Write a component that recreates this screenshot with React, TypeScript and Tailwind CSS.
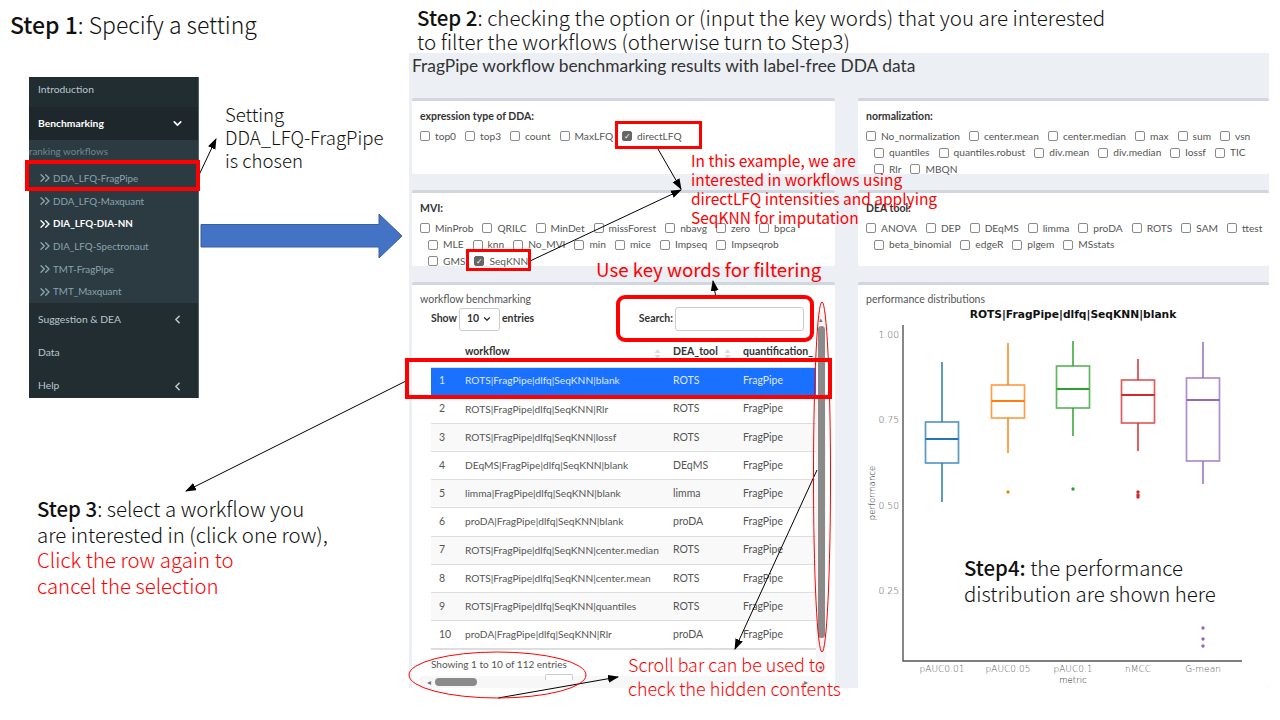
import { ChevronDown, ChevronLeft, ChevronsRight } from 'lucide-react';

const subMenu = [
    { name: 'DDA_LFQ-FragPipe', active: false },
    { name: 'DDA_LFQ-Maxquant', active: false },
    { name: 'DIA_LFQ-DIA-NN', active: true },
    { name: 'DIA_LFQ-Spectronaut', active: false },
    { name: 'TMT-FragPipe', active: false },
    { name: 'TMT_Maxquant', active: false },
];

const rows = [
    ['ROTS|FragPipe|dlfq|SeqKNN|blank', 'ROTS'],
    ['ROTS|FragPipe|dlfq|SeqKNN|Rlr', 'ROTS'],
    ['ROTS|FragPipe|dlfq|SeqKNN|lossf', 'ROTS'],
    ['DEqMS|FragPipe|dlfq|SeqKNN|blank', 'DEqMS'],
    ['limma|FragPipe|dlfq|SeqKNN|blank', 'limma'],
    ['proDA|FragPipe|dlfq|SeqKNN|blank', 'proDA'],
    ['ROTS|FragPipe|dlfq|SeqKNN|center.median', 'ROTS'],
    ['ROTS|FragPipe|dlfq|SeqKNN|center.mean', 'ROTS'],
    ['ROTS|FragPipe|dlfq|SeqKNN|quantiles', 'ROTS'],
    ['proDA|FragPipe|dlfq|SeqKNN|Rlr', 'proDA'],
];

const boxes = [
    { x: 942, color: '#1f77b4', top: 362, bottom: 502, q1: 422, q3: 463, med: 439, dots: [] as number[] },
    { x: 1008, color: '#ff7f0e', top: 343, bottom: 453, q1: 385, q3: 418, med: 401, dots: [492] },
    { x: 1073, color: '#2ca02c', top: 341, bottom: 436, q1: 366, q3: 408, med: 389, dots: [489] },
    { x: 1138, color: '#d62728', top: 359, bottom: 451, q1: 380, q3: 423, med: 395, dots: [492, 495, 497] },
    { x: 1203, color: '#9467bd', top: 342, bottom: 484, q1: 378, q3: 461, med: 400, dots: [628, 639, 646] },
];

const Check = ({ label, checked }: { label: string; checked?: boolean }) => (
    <label className="flex items-center gap-[5px]">
        <span
            className={`flex h-[10px] w-[10px] items-center justify-center rounded-[2px] border text-[8px] leading-none text-white ${
                checked ? 'border-[#666] bg-[#666]' : 'border-[#8a8a8a] bg-white'
            }`}
        >
            {checked ? '✓' : ''}
        </span>
        {label}
    </label>
);

const Card = ({ title, lines }: { title: string; lines: { label: string; checked?: boolean }[][] }) => (
    <div className="rounded-[2px] border-t-[3px] border-[#d2d6de] bg-white pl-[8px] pt-[8px] text-[10.2px] text-[#555]">
        <div className="mb-[5px] text-[10.5px] font-bold leading-[14px] text-[#333]">{title}</div>
        {lines.map((line, i) => (
            <div key={i} className={`flex h-[16.5px] items-center gap-[9px] whitespace-nowrap ${i > 0 ? 'pl-[8px]' : ''}`}>
                {line.map((c) => (
                    <Check key={c.label} label={c.label} checked={c.checked} />
                ))}
            </div>
        ))}
    </div>
);

const SortIcon = () => (
    <svg className="absolute right-[12px] top-[12px]" width="7" height="10" viewBox="0 0 7 10" fill="#dcdcdc">
        <path d="M3.5 0L6.5 4H.5ZM3.5 10L.5 6H6.5Z" />
    </svg>
);

const names = (s: string) => s.split(' ').map((label) => ({ label }));

export default function App() {
    return (
        <div className="relative flex h-[720px] w-[1280px] overflow-hidden bg-white font-['Noto_Sans_CJK_SC',sans-serif] font-light text-[#111]">
            {/* Left column */}
            <div className="flex w-[409px] shrink-0 flex-col">
                <h1 className="pl-[10px] pt-[8px] text-[23px] font-light leading-[32px]">
                    <b className="font-medium">Step 1</b>: Specify a setting
                </h1>
                <div className="mt-[37px] flex">
                    <aside className="ml-[29px] h-[321px] w-[170px] overflow-hidden border-r border-[#50626e] bg-[#222d32] font-['Lato',sans-serif] text-[10.3px] font-normal text-[#b8c7ce]">
                        <div className="flex h-[30px] items-center pb-[4px] pl-[9px]">Introduction</div>
                        <div className="flex h-[33px] items-center justify-between bg-[#1e282c] pl-[9px] pr-[14px] font-bold text-white">
                            Benchmarking
                            <ChevronDown size={13} strokeWidth={3} />
                        </div>
                        <div className="h-[163px] bg-[#2c3b41] pt-[1px] text-[9.8px] text-[#8aa4af]">
                            <div className="flex h-[21px] items-center text-[#6f8791]">ranking workflows</div>
                            <div className="pt-[5px]">
                                {subMenu.map((item) => (
                                    <div
                                        key={item.name}
                                        className={`flex h-[22.7px] items-center pl-[8px] ${item.active ? 'font-bold text-white' : ''}`}
                                    >
                                        <ChevronsRight size={16} strokeWidth={2} />
                                        {item.name}
                                    </div>
                                ))}
                            </div>
                        </div>
                        <div className="flex h-[33px] items-center justify-between pl-[9px] pr-[14px]">
                            Suggestion &amp; DEA
                            <ChevronLeft size={13} strokeWidth={3} />
                        </div>
                        <div className="flex h-[34px] items-center pl-[9px]">Data</div>
                        <div className="flex h-[28px] items-center justify-between pl-[9px] pr-[14px] pt-[4px]">
                            Help
                            <ChevronLeft size={13} strokeWidth={3} />
                        </div>
                    </aside>
                    <p className="ml-[26px] mt-[25px] whitespace-nowrap text-[18.6px] leading-[23px]">
                        Setting
                        <br />
                        DDA_LFQ-FragPipe
                        <br />
                        is chosen
                    </p>
                </div>
                <p className="ml-[37px] mt-[98px] whitespace-nowrap text-[20.4px] leading-[25.7px]">
                    <b className="font-medium">Step 3</b>: select a workflow you
                    <br />
                    are interested in (click one row),
                    <br />
                    <span className="text-[#ff0000]">
                        Click the row again to
                        <br />
                        cancel the selection
                    </span>
                </p>
            </div>

            {/* Right column */}
            <div className="flex w-[860px] shrink-0 flex-col">
                <p className="ml-[8px] h-[53px] whitespace-nowrap pt-[5px] text-[20.5px] leading-[24px]">
                    <b className="font-medium">Step 2</b>: checking the option or (input the key words) that you are interested
                    <br />
                    to filter the workflows (otherwise turn to Step3)
                </p>
                <main className="flex h-[635px] flex-col bg-[#ecf0f5] pl-[3px] font-['Lato',sans-serif] font-normal">
                    <h2 className="h-[46px] pt-[2px] text-[17.4px] leading-[22px] text-[#333]">
                        FragPipe workflow benchmarking results with label-free DDA data
                    </h2>
                    <div className="grid grid-cols-[423px_411px] grid-rows-[76px_76px_406px] gap-x-[23px] gap-y-[16px]">
                        <Card
                            title="expression type of DDA:"
                            lines={[[...names('top0 top3 count MaxLFQ'), { label: 'directLFQ', checked: true }]]}
                        />
                        <Card
                            title="normalization:"
                            lines={[
                                names('No_normalization center.mean center.median max sum vsn'),
                                names('quantiles quantiles.robust div.mean div.median lossf TIC'),
                                names('Rlr MBQN'),
                            ]}
                        />
                        <Card
                            title="MVI:"
                            lines={[
                                names('MinProb QRILC MinDet missForest nbavg zero bpca'),
                                names('MLE knn No_MVI min mice Impseq Impseqrob'),
                                [{ label: 'GMS' }, { label: 'SeqKNN', checked: true }],
                            ]}
                        />
                        <Card
                            title="DEA tool:"
                            lines={[
                                names('ANOVA DEP DEqMS limma proDA ROTS SAM ttest'),
                                names('beta_binomial edgeR plgem MSstats'),
                            ]}
                        />

                        {/* Workflow table */}
                        <section className="relative rounded-[2px] border-t-[3px] border-[#d2d6de] bg-white pl-[8px] text-[10.5px] text-[#555]">
                            <div className="pt-[7px] leading-[14px]">workflow benchmarking</div>
                            <div className="mt-[1px] flex h-[24px] items-center pl-[11px] pr-[31px]">
                                <span className="font-bold text-[#333]">Show</span>
                                <span className="mx-[2px] flex h-[23px] w-[41px] items-center justify-between rounded-[3px] border border-[#ccc] px-[7px] font-bold text-[#333]">
                                    10
                                    <ChevronDown size={10} strokeWidth={3} />
                                </span>
                                <span className="font-bold text-[#333]">entries</span>
                                <span className="ml-auto font-bold text-[#333]">Search:</span>
                                <span className="ml-[2px] h-[24px] w-[129px] rounded-[3px] border border-[#ccc] bg-white" />
                            </div>
                            <div className="ml-[11px] mt-[6px] w-[385px] overflow-hidden">
                                <table className="w-[385px] table-fixed border-collapse border-b-2 border-[#ddd]">
                                    <colgroup>
                                        <col className="w-[34px]" />
                                        <col className="w-[208px]" />
                                        <col className="w-[70px]" />
                                        <col />
                                    </colgroup>
                                    <thead>
                                        <tr className="h-[30px] text-left font-bold text-[#333]">
                                            <th />
                                            <th className="relative font-bold">
                                                workflow
                                                <SortIcon />
                                            </th>
                                            <th className="relative font-bold">
                                                DEA_tool
                                                <SortIcon />
                                            </th>
                                            <th className="overflow-hidden whitespace-nowrap font-bold">quantification_</th>
                                        </tr>
                                    </thead>
                                    <tbody>
                                        {rows.map(([workflow, tool], i) => (
                                            <tr
                                                key={workflow}
                                                className={`h-[28.2px] border-t border-[#ddd] ${
                                                    i === 0
                                                        ? 'bg-[#1a70ff] text-[#dce9ff]'
                                                        : i % 2 === 0
                                                          ? 'bg-[#f9f9f9]'
                                                          : 'bg-white'
                                                }`}
                                            >
                                                <td className="pl-[8px]">{i + 1}</td>
                                                <td className="whitespace-nowrap text-[10.2px]">{workflow}</td>
                                                <td>{tool}</td>
                                                <td>FragPipe</td>
                                            </tr>
                                        ))}
                                    </tbody>
                                </table>
                            </div>
                            <div className="ml-[11px] mt-[7px] text-[10px] leading-[14px]">Showing 1 to 10 of 112 entries</div>

                            {/* Horizontal scroll bar */}
                            <div className="absolute bottom-0 left-[8px] flex h-[12px] w-[406px] items-center bg-[#f7f7f7] pl-[7px] text-[8px] text-[#777]">
                                <span>◂</span>
                                <span className="ml-[4px] h-[8px] w-[42px] rounded-full bg-[#8a8a8a]" />
                                <span className="ml-auto pr-[18px]">▸</span>
                            </div>
                            <span className="absolute bottom-[8px] left-[133px] h-[6px] w-[28px] rounded-t-[2px] border border-b-0 border-[#ccc] bg-white" />

                            {/* Vertical scroll bar */}
                            <div className="absolute left-[404px] top-[27px] flex h-[362px] w-[10px] flex-col items-center bg-[#f5f5f5] text-[7px] leading-[14px] text-[#777]">
                                <span>▴</span>
                                <span className="h-[312px] w-[7px] rounded-full bg-[#8a8a8a]" />
                                <span className="mt-auto">▾</span>
                            </div>
                        </section>

                        {/* Chart panel */}
                        <section className="rounded-[2px] border-t-[3px] border-[#d2d6de] bg-white pl-[8px] pt-[7px] text-[10.5px] leading-[14px] text-[#555]">
                            performance distributions
                        </section>
                    </div>
                </main>
            </div>

            {/* Boxplot, in page coordinates */}
            <svg className="absolute left-0 top-0 h-[720px] w-[1280px] font-['DejaVu_Sans',sans-serif]" viewBox="0 0 1280 720">
                <text x="1073" y="318" textAnchor="middle" fontSize="10.7" fontWeight="700" fill="#111">
                    ROTS|FragPipe|dlfq|SeqKNN|blank
                </text>
                <path d="M903 325V661H1242" fill="none" stroke="#555" strokeWidth="1.4" />
                {[
                    ['1.00', 334],
                    ['0.75', 419],
                    ['0.50', 505],
                    ['0.25', 590],
                ].map(([t, y]) => (
                    <text key={t} x="899" y={Number(y) + 3.5} textAnchor="end" fontSize="9.2" fill="#5a5a5a">
                        {t}
                    </text>
                ))}
                {boxes.map((b) => (
                    <g key={b.x} stroke={b.color}>
                        <path d={`M${b.x} ${b.top}V${b.q1}M${b.x} ${b.q3}V${b.bottom}`} strokeWidth="1.6" opacity="0.9" />
                        <rect x={b.x - 16.5} y={b.q1} width="33" height={b.q3 - b.q1} fill="none" strokeWidth="1.7" opacity="0.75" />
                        <path d={`M${b.x - 16.5} ${b.med}H${b.x + 16.5}`} strokeWidth="2" />
                        {b.dots.map((d) => (
                            <circle key={d} cx={b.x} cy={d} r="1.7" fill={b.color} stroke="none" />
                        ))}
                    </g>
                ))}
                {['pAUC0.01', 'pAUC0.05', 'pAUC0.1', 'nMCC', 'G-mean'].map((t, i) => (
                    <text key={t} x={boxes[i].x} y="672" textAnchor="middle" fontSize="9" fill="#5a5a5a">
                        {t}
                    </text>
                ))}
                <text x="1073" y="683" textAnchor="middle" fontSize="8.5" fill="#111">
                    metric
                </text>
                <text transform="translate(875 493) rotate(-90)" textAnchor="middle" fontSize="8.5" fill="#111">
                    performance
                </text>
            </svg>

            {/* Slide annotations */}
            <svg className="absolute left-0 top-0 h-[720px] w-[1280px]" viewBox="0 0 1280 720">
                <defs>
                    <marker id="head" markerWidth="12" markerHeight="10" refX="10" refY="4" orient="auto" markerUnits="userSpaceOnUse">
                        <path d="M0 0L11 4L0 8Z" fill="#000" />
                    </marker>
                </defs>
                <path d="M201 224.5H379V214L402 236L379 258V247H201Z" fill="#4472c4" stroke="#3a5f9f" strokeWidth="1" />
                <g stroke="#000" strokeWidth="1" fill="none">
                    <path d="M199 175L216 139" markerEnd="url(#head)" />
                    <path d="M658 149L681 189" markerEnd="url(#head)" />
                    <path d="M530 261L681 190" markerEnd="url(#head)" />
                    <path d="M716 298L713 281" markerEnd="url(#head)" />
                    <path d="M408 380L186 491" markerEnd="url(#head)" />
                    <path d="M817 470L735 649" markerEnd="url(#head)" />
                    <path d="M498 698L618 677" markerEnd="url(#head)" />
                </g>
                <ellipse cx="822" cy="477" rx="8.5" ry="175" fill="none" stroke="#ff0000" strokeWidth="1" />
                <ellipse cx="497.5" cy="675" rx="88.5" ry="23" fill="none" stroke="#ff0000" strokeWidth="1" />
            </svg>

            <div className="absolute left-[25px] top-[160px] h-[31px] w-[175px] border-[4px] border-[#ff0000]" />
            <div className="absolute left-[615px] top-[121px] h-[28px] w-[87px] border-[3px] border-[#ff0000]" />
            <div className="absolute left-[466px] top-[249px] h-[22px] w-[65px] border-[3px] border-[#ff0000]" />
            <div className="absolute left-[616px] top-[295px] h-[47px] w-[198px] rounded-[9px] border-[4px] border-[#ff0000]" />
            <div className="absolute left-[405px] top-[358px] h-[41px] w-[427px] border-[4px] border-[#ff0000]" />

            <p className="absolute left-[691px] top-[151px] whitespace-nowrap text-[15.5px] font-normal leading-[19px] text-[#ff0000]">
                In this example, we are
                <br />
                interested in workflows using
                <br />
                directLFQ intensities and applying
                <br />
                SeqKNN for imputation
            </p>
            <p className="absolute left-[596px] top-[257px] whitespace-nowrap text-[18.7px] font-normal leading-[24px] text-[#ff0000]">
                Use key words for filtering
            </p>
            <p className="absolute left-[628px] top-[652px] whitespace-nowrap text-[17.9px] leading-[24px] text-[#ff0000]">
                Scroll bar can be used to
                <br />
                check the hidden contents
            </p>
            <p className="absolute left-[964px] top-[554px] whitespace-nowrap text-[20.4px] leading-[26px] text-[#111]">
                <b className="font-medium">Step4:</b> the performance
                <br />
                distribution are shown here
            </p>
        </div>
    );
}
